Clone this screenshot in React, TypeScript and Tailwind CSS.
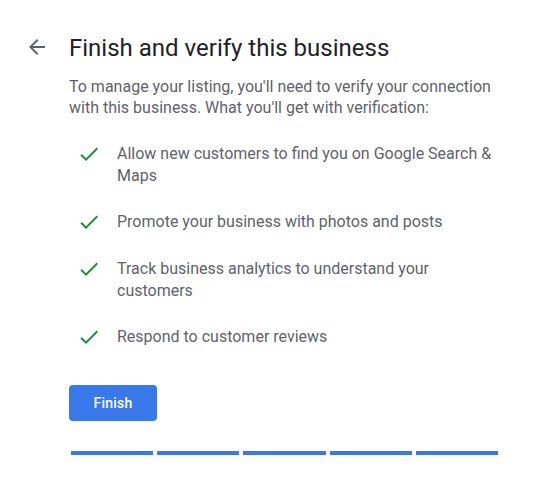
import React from 'react';

const benefits = [
    'Allow new customers to find you on Google Search & Maps',
    'Promote your business with photos and posts',
    'Track business analytics to understand your customers',
    'Respond to customer reviews',
];

const ArrowBack = () => (
    <svg width="24" height="24" viewBox="0 0 24 24" fill="#5f6368">
        <path d="M20 11H7.83l5.59-5.59L12 4l-8 8 8 8 1.41-1.41L7.83 13H20v-2z" />
    </svg>
);

const Check = () => (
    <svg width="24" height="24" viewBox="0 0 24 24" fill="#1e8e3e">
        <path d="M9 16.17L4.83 12l-1.42 1.41L9 19 21 7l-1.41-1.41z" />
    </svg>
);

const App = () => {
    return (
        <div className="min-h-screen bg-white font-['Roboto',sans-serif]">
            <div className="flex pl-[25px] pt-[32px]">
                {/* Back button */}
                <button className="mt-[3px] h-6 w-6 shrink-0">
                    <ArrowBack />
                </button>

                <div className="ml-5 w-[440px]">
                    <h1 className="text-[24px] leading-[32px] text-[#202124]">
                        Finish and verify this business
                    </h1>
                    <p className="mt-[12px] w-[432px] text-[16px] leading-[21px] text-[#5f6368]">
                        To manage your listing, you'll need to verify your connection with this business. What you'll get with verification:
                    </p>

                    {/* Benefits */}
                    <ul className="mt-[25px] flex flex-col gap-6 pl-2">
                        {benefits.map((item) => (
                            <li key={item} className="flex items-start">
                                <span className="-mt-[1px] shrink-0">
                                    <Check />
                                </span>
                                <span className="ml-4 max-w-[380px] text-[16px] leading-[22px] text-[#5f6368]">{item}</span>
                            </li>
                        ))}
                    </ul>

                    <button className="mt-[36px] h-9 w-[88px] rounded bg-[#3878e8] text-sm font-medium tracking-[0.25px] text-white">
                        Finish
                    </button>

                    {/* Progress */}
                    <div className="ml-[2px] mt-[30px] flex w-[427px] gap-1">
                        <div className="h-1 flex-1 bg-[#3878e8]" />
                        <div className="h-1 flex-1 bg-[#3878e8]" />
                        <div className="h-1 flex-1 bg-[#3878e8]" />
                        <div className="h-1 flex-1 bg-[#3878e8]" />
                        <div className="h-1 flex-1 bg-[#3878e8]" />
                    </div>
                </div>
            </div>
        </div>
    );
};

export default App;
